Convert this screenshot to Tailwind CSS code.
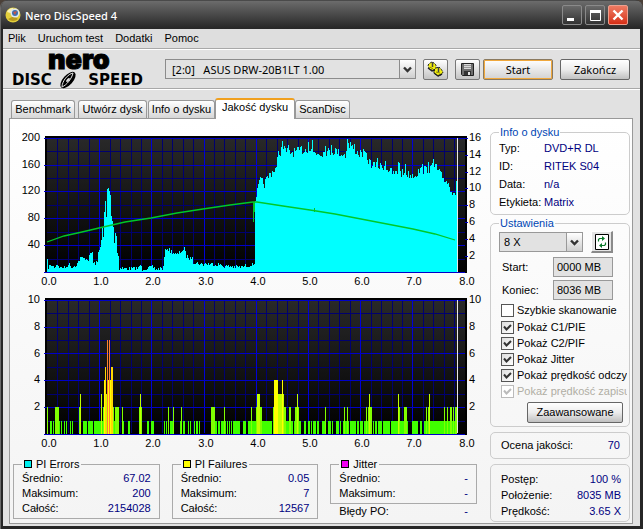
<!DOCTYPE html>
<html lang="pl">
<head>
  <meta charset="UTF-8" />
  <meta name="viewport" content="width=device-width, initial-scale=1.0" />
  <title>Nero DiscSpeed 4</title>
  <script src="https://cdn.jsdelivr.net/npm/@tailwindcss/browser@4"></script>
</head>
<body class="bg-[#4b4038] min-h-screen font-['Liberation_Sans',sans-serif] text-[11px] leading-[15px] text-black">
  <div class="min-h-screen flex flex-col rounded-t-lg overflow-hidden bg-[#262626] border-l border-[#6a6a6a]">

    <!-- title bar -->
    <header class="h-[29px] shrink-0 flex items-center pl-1 pr-[15px] bg-linear-to-b from-[#6c6c6c] via-[#484848] to-[#262626] border-t border-[#4a4a4a]">
      <svg class="w-4 h-4" viewBox="0 0 16 16">
        <circle cx="8" cy="8" r="7.5" fill="#e3cf3c" />
        <path d="M2 5a7 7 0 0 1 6-4l1 6z" fill="#f8f3b8" />
        <path d="M3 12a7 7 0 0 0 10 0l-4-3z" fill="#b89a1c" />
        <circle cx="10" cy="6" r="4.5" fill="#dde6ef" />
        <circle cx="10" cy="6" r="3" fill="#3b6fae" />
        <path d="M8 5l4-1-2 4z" fill="#c4574a" />
      </svg>
      <h1 class="flex-1 ml-1 text-white text-[11px] font-['Noto_Sans',sans-serif] font-medium">Nero DiscSpeed 4</h1>
      <div class="flex gap-[3px]">
        <button aria-label="Minimalizuj" class="w-5 h-5 rounded-xs border border-[#8a8a8a] bg-linear-to-b from-[#6a6a6a] to-[#333]">
          <svg viewBox="0 0 18 18" class="w-full h-full"><rect x="4" y="12" width="7" height="3" fill="#fff" /></svg>
        </button>
        <button aria-label="Maksymalizuj" class="w-5 h-5 rounded-xs border border-[#8a8a8a] bg-linear-to-b from-[#6a6a6a] to-[#333]">
          <svg viewBox="0 0 18 18" class="w-full h-full"><path d="M4.500 4.500h10v10h-10z" fill="none" stroke="#fff" /><path d="M4 4h11v3H4z" fill="#fff" /></svg>
        </button>
        <button aria-label="Zamknij" class="w-5 h-5 rounded-xs border border-[#eda08f] bg-linear-to-b from-[#ee7a62] to-[#d62c12]">
          <svg viewBox="0 0 18 18" class="w-full h-full"><path d="M4.500 4.500l9 9m0-9l-9 9" stroke="#fff" stroke-width="2.400" /></svg>
        </button>
      </div>
    </header>

    <div class="flex-1 flex flex-col ml-[2px] mr-[3px] mb-[3px] bg-[#e1e1e1]">
      <!-- menu -->
      <nav class="h-5 flex items-center gap-3 px-[5px] bg-[#dedede] border-b border-[#a8a8a8]">
        <a href="#">Plik</a>
        <a href="#">Uruchom test</a>
        <a href="#">Dodatki</a>
        <a href="#">Pomoc</a>
      </nav>

      <!-- toolbar -->
      <div class="h-10 flex items-center pl-2 pr-[10px] border-t border-b border-t-white border-b-[#a8a8a8] font-['Noto_Sans',sans-serif]">
        <svg class="w-[134px] h-[38px] shrink-0 overflow-visible" viewBox="11 50 134 38" role="img" aria-label="Nero DiscSpeed">
          <text x="48" y="69" font-family="Inter" font-weight="900" font-size="27" stroke="#000">nero</text>
          <text x="12" y="85" font-family="DejaVu Sans" font-weight="700" font-size="15">DISC</text>
          <text x="143" y="85" text-anchor="end" font-family="DejaVu Sans" font-weight="700" font-size="15">SPEED</text>
          <ellipse cx="68" cy="80" rx="10" ry="5" transform="rotate(-48 68 80)" />
          <path d="M62 87c0-6 6-13 11-14-1 5-6 12-11 14z" fill="none" stroke="#e1e1e1" />
          <ellipse cx="68" cy="80" rx="2.500" ry="1.200" transform="rotate(-48 68 80)" fill="#e1e1e1" />
        </svg>
        <div class="relative flex-1 ml-5 h-5 border border-[#8c8c8c] bg-[#e2e2e2]">
          <select aria-label="Napęd" class="appearance-none w-full h-full pl-[6px] pr-5 whitespace-pre">
            <option>[2:0]&nbsp;&nbsp; ASUS DRW-20B1LT 1.00</option>
          </select>
          <span class="absolute right-0 inset-y-0 w-4 flex items-center justify-center border-l border-[#8c8c8c] bg-linear-to-b from-white to-[#cfcfcf] pointer-events-none">
            <svg class="w-[9px] h-[7px]" viewBox="0 0 9 7"><path d="M1 1.500l3.500 3.500L8 1.500" fill="none" stroke="#333" stroke-width="2.400" /></svg>
          </span>
        </div>
        <button aria-label="Opcje" class="ml-[7px] w-[25px] h-[21px] flex items-center justify-center rounded-xs border border-[#777] bg-linear-to-b from-white to-[#c4c4c4]">
          <svg class="w-[17px] h-[17px]" viewBox="0 0 17 17">
            <path d="M1 4l2-2 2-1 2 1 2 2 0 3-2 2-3 0-2-2z" fill="#f2ee10" stroke="#222" stroke-dasharray="2 1" />
            <path d="M7 9l2-2 3-1 2 2 2 3-1 2-3 2-3-1-2-2z" fill="#f2ee10" stroke="#222" stroke-dasharray="2 1" />
            <path d="M5.500 1v5M11.500 6v5" stroke="#444" stroke-width="1.500" />
            <path d="M1 7l4 3 3-1M7 12l4 3 4-2" fill="none" stroke="#222" stroke-width="1.400" />
            <path d="M3 6l3 2M9 11l4 1" stroke="#8a8600" />
          </svg>
        </button>
        <button aria-label="Zapisz" class="ml-[7px] w-[25px] h-[21px] flex items-center justify-center rounded-xs border border-[#777] bg-linear-to-b from-white to-[#c4c4c4]">
          <svg class="w-[13px] h-[13px]" viewBox="0 0 13 13">
            <path d="M.5.5h12v12h-11l-1-1z" fill="#6e6e6e" stroke="#222" />
            <path d="M3 1h7v5H3z" fill="#d8d8d8" />
            <path d="M3 2.500h7M3 4.500h7" stroke="#999" />
            <path d="M3 8h7v4H3z" fill="#333" /><path d="M7 9h2v3H7z" fill="#e4e4e4" />
          </svg>
        </button>
        <button class="ml-[3px] w-[70px] h-[21px] rounded-xs border border-[#8a7a60] bg-linear-to-b from-white to-[#d2d2d2] ring-1 ring-inset ring-[#f0a83c]">Start</button>
        <button class="ml-[7px] w-[70px] h-[21px] rounded-xs border border-[#666] bg-linear-to-b from-white via-[#ececec] to-[#c0c0c0]">Zakończ</button>
      </div>

      <!-- tabs -->
      <div role="tablist" class="h-[29px] flex items-end pl-2 border-t border-white">
        <button role="tab" class="w-16 h-[18px] mr-[3px] rounded-t-[3px] border border-b-0 border-[#999] bg-linear-to-b from-white to-[#d6d6d6]">Benchmark</button>
        <button role="tab" class="w-[69px] h-[18px] mr-px rounded-t-[3px] border border-b-0 border-[#999] bg-linear-to-b from-white to-[#d6d6d6]">Utwórz dysk</button>
        <button role="tab" class="w-[67px] h-[18px] rounded-t-[3px] border border-b-0 border-[#999] bg-linear-to-b from-white to-[#d6d6d6]">Info o dysku</button>
        <button role="tab" aria-selected="true" class="relative z-10 w-20 h-[21px] -mb-px pb-1 rounded-t-[3px] border-x border-t-2 border-x-[#999] border-t-[#f0a01e] bg-white">Jakość dysku</button>
        <button role="tab" class="w-[55px] h-[18px] rounded-t-[3px] border border-b-0 border-[#999] bg-linear-to-b from-white to-[#d6d6d6]">ScanDisc</button>
      </div>

      <main class="flex-1 flex ml-[6px] mr-[7px] mb-[2px] border border-[#999] bg-linear-to-b from-white to-[#f4f4f4]">
        <div class="flex-1 min-w-0 pt-[7px]">
          <svg id="pie" class="block w-full h-auto text-[11px]" viewBox="10 126 480 162"></svg>
          <svg id="pif" class="block w-full h-auto text-[11px]" viewBox="10 288 480 162"></svg>

          <div class="mt-[7px] grid grid-cols-3 gap-3 pl-[3px] pr-[13px]">
            <fieldset class="border border-[#aaa] px-2 pb-[2px]">
              <legend class="flex items-center gap-1 px-[2px] leading-[14px]"><i class="w-2 h-2 border border-black bg-[#00f0f0]"></i>PI Errors</legend>
              <dl class="grid grid-cols-[auto_1fr]">
                <dt>Średnio:</dt><dd class="text-right text-[#000080]">67.02</dd>
                <dt>Maksimum:</dt><dd class="text-right text-[#000080]">200</dd>
                <dt>Całość:</dt><dd class="text-right text-[#000080]">2154028</dd>
              </dl>
            </fieldset>
            <fieldset class="border border-[#aaa] px-2 pb-[2px]">
              <legend class="flex items-center gap-1 px-[2px] leading-[14px]"><i class="w-2 h-2 border border-black bg-[#ffff00]"></i>PI Failures</legend>
              <dl class="grid grid-cols-[auto_1fr]">
                <dt>Średnio:</dt><dd class="text-right text-[#000080]">0.05</dd>
                <dt>Maksimum:</dt><dd class="text-right text-[#000080]">7</dd>
                <dt>Całość:</dt><dd class="text-right text-[#000080]">12567</dd>
              </dl>
            </fieldset>
            <div>
              <fieldset class="border border-[#aaa] px-2 pb-[2px]">
                <legend class="flex items-center gap-1 px-[2px] leading-[14px]"><i class="w-2 h-2 border border-black bg-[#f000f0]"></i>Jitter</legend>
                <dl class="grid grid-cols-[auto_1fr]">
                  <dt>Średnio:</dt><dd class="text-right text-[#000080]">-</dd>
                  <dt>Maksimum:</dt><dd class="text-right text-[#000080]">-</dd>
                </dl>
              </fieldset>
              <p class="flex justify-between px-[9px]">Błędy PO: <span class="text-[#000080]">-</span></p>
            </div>
          </div>
        </div>

        <aside class="w-[140px] mr-[2px] flex flex-col">
          <fieldset class="mt-[6px] h-[90px] rounded-[5px] border border-[#ccc] px-2">
            <legend class="px-px leading-[14px] text-[#0046b4]">Info o dysku</legend>
            <dl class="grid grid-cols-[45px_1fr] leading-[18px]">
              <dt>Typ:</dt><dd class="text-[#000080]">DVD+R DL</dd>
              <dt>ID:</dt><dd class="text-[#000080]">RITEK S04</dd>
              <dt>Data:</dt><dd class="text-[#000080]">n/a</dd>
              <dt>Etykieta:</dt><dd class="text-[#000080]">Matrix</dd>
            </dl>
          </fieldset>

          <fieldset class="mt-px rounded-[5px] border border-[#ccc] pl-2 pr-[2px] pb-[3px] min-w-0">
            <legend class="px-px leading-[14px] text-[#0046b4]">Ustawienia</legend>
            <div class="flex items-center gap-2 pt-px">
              <div class="relative w-[84px] h-5 border border-[#999] bg-[#e2e2e2]">
                <select aria-label="Prędkość" class="appearance-none w-full h-full pl-1">
                  <option>8 X</option>
                </select>
                <span class="absolute right-0 inset-y-0 w-4 flex items-center justify-center border-l border-[#999] bg-linear-to-b from-white to-[#cfcfcf] pointer-events-none">
                  <svg class="w-[9px] h-[7px]" viewBox="0 0 9 7"><path d="M1 1.500l3.500 3.500L8 1.500" fill="none" stroke="#333" stroke-width="2.400" /></svg>
                </span>
              </div>
              <button aria-label="Odśwież" class="w-[22px] h-[22px] flex items-center justify-center border-r-2 border-b-2 border-t border-l border-t-white border-l-white border-[#8a8a8a] bg-[#e4e4e4]">
                <svg class="w-[14px] h-[16px]" viewBox="0 0 14 16">
                  <path d="M.5.5h13v15H.5z" fill="#fff" stroke="#000" />
                  <path d="M3.500 7.500v-2l1-1H7M10.500 8.500v2l-1 1H7" fill="none" stroke="#0a7a2a" stroke-width="1.200" />
                  <path d="M7 2l3 2.500-3 2.500zM7 9l-3 2.500 3 2.500z" fill="#0a7a2a" />
                </svg>
              </button>
            </div>
            <div class="mt-1 grid grid-cols-[51px_60px] gap-y-[3px] pl-[3px] items-center">
              <label for="from">Start:</label>
              <input id="from" value="0000 MB" readonly class="w-full h-5 pl-[3px] border border-[#999] bg-[#e2e2e2]" />
              <label for="to">Koniec:</label>
              <input id="to" value="8036 MB" readonly class="w-full h-5 pl-[3px] border border-[#999] bg-[#e2e2e2]" />
            </div>
            <div class="mt-[2px] pl-[2px] pr-[2px] flex flex-col leading-4 whitespace-nowrap overflow-hidden">
              <label class="flex items-center gap-[3px] mb-px"><input type="checkbox" class="appearance-none shrink-0 w-[13px] h-[13px] border border-[#555] bg-white" />Szybkie skanowanie</label>
              <label class="flex items-center gap-[3px]"><span class="grid shrink-0"><input type="checkbox" checked class="appearance-none [grid-area:1/1] w-[13px] h-[13px] border border-[#555] bg-linear-to-br from-[#ddd] to-white" /><svg class="[grid-area:1/1] w-[13px] h-[13px] pointer-events-none" viewBox="0 0 13 13"><path d="M3 5.500l2.500 3L10 4" fill="none" stroke="#333" stroke-width="2" /></svg></span>Pokaż C1/PIE</label>
              <label class="flex items-center gap-[3px]"><span class="grid shrink-0"><input type="checkbox" checked class="appearance-none [grid-area:1/1] w-[13px] h-[13px] border border-[#555] bg-linear-to-br from-[#ddd] to-white" /><svg class="[grid-area:1/1] w-[13px] h-[13px] pointer-events-none" viewBox="0 0 13 13"><path d="M3 5.500l2.500 3L10 4" fill="none" stroke="#333" stroke-width="2" /></svg></span>Pokaż C2/PIF</label>
              <label class="flex items-center gap-[3px]"><span class="grid shrink-0"><input type="checkbox" checked class="appearance-none [grid-area:1/1] w-[13px] h-[13px] border border-[#555] bg-linear-to-br from-[#ddd] to-white" /><svg class="[grid-area:1/1] w-[13px] h-[13px] pointer-events-none" viewBox="0 0 13 13"><path d="M3 5.500l2.500 3L10 4" fill="none" stroke="#333" stroke-width="2" /></svg></span>Pokaż Jitter</label>
              <label class="flex items-center gap-[3px]"><span class="grid shrink-0"><input type="checkbox" checked class="appearance-none [grid-area:1/1] w-[13px] h-[13px] border border-[#555] bg-linear-to-br from-[#ddd] to-white" /><svg class="[grid-area:1/1] w-[13px] h-[13px] pointer-events-none" viewBox="0 0 13 13"><path d="M3 5.500l2.500 3L10 4" fill="none" stroke="#333" stroke-width="2" /></svg></span>Pokaż prędkość odczy</label>
              <label class="flex items-center gap-[3px] text-[#b0aea4]"><span class="grid shrink-0"><input type="checkbox" checked disabled class="appearance-none [grid-area:1/1] w-[13px] h-[13px] border border-[#bbb] bg-white" /><svg class="[grid-area:1/1] w-[13px] h-[13px] pointer-events-none" viewBox="0 0 13 13"><path d="M3 5.500l2.500 3L10 4" fill="none" stroke="#bbb" stroke-width="2" /></svg></span>Pokaż prędkość zapisu</label>
            </div>
            <button class="block mt-[3px] ml-7 w-24 h-[21px] rounded-xs border border-[#666] bg-linear-to-b from-white via-[#ececec] to-[#c0c0c0]">Zaawansowane</button>
          </fieldset>

          <dl class="mt-[5px] h-[27px] flex items-center justify-between rounded-[5px] border border-[#ccc] pl-[10px] pr-[9px]">
            <dt>Ocena jakości:</dt><dd class="text-[#000080]">70</dd>
          </dl>

          <dl class="mt-[5px] mb-px grid grid-cols-[auto_1fr] rounded-[5px] border border-[#ccc] pl-[10px] pr-[8px] pt-[6px] pb-[2px] leading-4">
            <dt>Postęp:</dt><dd class="text-right text-[#000080]">100 %</dd>
            <dt>Położenie:</dt><dd class="text-right text-[#000080]">8035 MB</dd>
            <dt>Prędkość:</dt><dd class="text-right text-[#000080]">3.65 X</dd>
          </dl>
        </aside>
      </main>
    </div>
  </div>

  <script>
    const X0 = 47, STEP = 52.2;

    function rect(x, y, w, h, fill) {
      return `<rect x="${x}" y="${y}" width="${w}" height="${h}" fill="${fill}"/>`;
    }
    function label(x, y, text, anchor) {
      return `<text x="${x}" y="${y}" text-anchor="${anchor}">${text}</text>`;
    }

    // black plot area with blue grid, top is the y of the highest grid line
    function grid(id, top) {
      let s = `<defs><linearGradient id="${id}" x2="0" y2="1"><stop stop-color="#292929"/><stop offset="1"/></linearGradient></defs>`;
      s += rect(45, top - 2, 422, 137, "#000") + rect(47, top, 418, 133, `url(#${id})`);
      for (let i = 0; i < 40; i++) {
        if (i % 5) s += rect(Math.round(X0 + i * STEP / 5), top, 1, 133, "#000070");
      }
      for (let i = 0; i < 5; i++) s += rect(47, Math.round(top + 13.4 + i * 26.8), 418, 1, "#000070");
      for (let i = 1; i < 8; i++) s += rect(Math.round(X0 + i * STEP), top, 1, 133, "#0000d8");
      for (let i = 0; i < 6; i++) s += rect(44, Math.round(top + i * 26.7), 421, 1, "#0000c8");
      for (let i = 0; i <= 8; i++) s += label(Math.round(X0 + 2 + i * STEP), top + 147, i + ".0", "middle");
      return s;
    }

    // PI errors: [x, top of column], straight between the points
    const pie = [[47,261],[48,267],[51,265],[54,267],[57,264],[60,268],[66,267],[68,264],[72,267],[77,264],[80,258],[88,259],[90,254],[92,252],[93,263],
      [97,263],[98,253],[100,245],[101,240],[102,228],[103,237],[104,212],[105,201],[106,217],[107,189],[108,188],[109,191],[110,195],[111,216],[112,221],
      [113,227],[114,243],[115,233],[116,236],[117,253],[118,256],[119,268],[130,269],[138,268],[140,265],[142,269],[152,267],[155,269],[163,268],[164,257],
      [165,251],[166,248],[170,251],[176,255],[180,252],[184,249],[186,256],[190,259],[192,256],[193,262],[200,264],[215,264],[225,266],[240,267],[254,264],
      [255,200],[257,190],[260,181],[264,184],[270,173],[276,168],[278,153],[283,149],[290,153],[300,151],[307,149],[316,153],[325,152],[335,151],[345,155],
      [347,145],[353,148],[358,153],[364,154],[370,163],[378,167],[384,166],[392,173],[402,173],[412,175],[420,171],[428,169],[434,166],[440,175],[446,181],
      [452,191],[455,192],[457,176]];
    const peaks = {282:141, 288:145, 301:146, 308:142, 312:140, 325:146, 331:145, 347:139, 350:142, 354:144, 365:152, 377:158, 385:161, 398:162, 399:163, 405:164, 422:164, 428:162, 433:159, 436:164};

    let seed = 7;
    function rnd() {
      seed = (seed * 16807) % 2147483647;
      return seed / 2147483647 - 0.5;
    }
    function topAt(x) {
      const i = pie.findIndex(p => p[0] >= x);
      if (pie[i][0] === x) return pie[i][1];
      const [a, b] = [pie[i - 1], pie[i]];
      return a[1] + (b[1] - a[1]) * (x - a[0]) / (b[0] - a[0]);
    }

    let s = grid("g1", 138);
    for (let x = 47; x < 457; x++) {
      const noise = rnd() * (x > 257 ? 9 : 4);
      const y = peaks[x] || Math.round(topAt(x) + (x > 100 && x < 119 ? 0 : noise));
      s += rect(x, y, 1, 272 - y, "#00ffff");
    }
    s += rect(457, 138, 1, 134, "#e8e8e8");
    s += `<polyline points="47,242 64,236 82,232 99,228 125,222 151,218 177,213 203,209 230,205 253,202 257,202 283,206 310,210 335,214 361,219 387,224 413,229 435,234 455,240" fill="none" stroke="#00c828" stroke-width="1.300"/>`;
    s += rect(253, 202, 1, 20, "#00c828") + rect(254, 202, 1, 10, "#00c828") + rect(314, 208, 1, 4, "#00c828");
    for (let i = 0; i < 5; i++) s += label(40, Math.round(141 + i * 26.7), 200 - 40 * i, "end");
    for (let i = 0; i < 8; i++) {
      s += label(469, Math.round(141 + i * 16.8), 16 - 2 * i, "start");
      s += rect(465, Math.round(138 + i * 16.8), 3, 1, "#0000c0");
    }
    document.getElementById("pie").innerHTML = s;

    // PI failures: [x, width, value]
    const pif = [[47,1,2],[50,2,1],[53,1,1],[55,4,2],[59,1,1],[61,1,1],[64,1,1],[66,1,1],[70,1,1],[72,1,1],[79,1,2],[80,1,3],[83,4,1],[88,2,1],[90,3,1],
      [94,2,1],[96,8,1],[101,1,3],[103,1,2],[104,1,4],[105,1,5],[106,1,3],[107,1,7],[108,1,4],[109,1,7],[110,1,4],[111,2,5],[113,1,2],[114,1,1],[115,4,2],
      [122,1,2],[123,1,1],[128,2,1],[139,1,2],[140,1,3],[141,1,2],[147,2,1],[151,3,1],[164,1,1],[166,1,1],[168,1,2],[170,3,1],[173,1,2],[180,1,1],[181,1,2],
      [183,2,1],[188,1,1],[190,1,1],[194,1,1],[196,2,1],[199,1,1],[211,4,2],[215,2,1],[218,2,1],[221,3,1],[224,1,2],[225,1,1],[227,1,1],[229,1,1],[231,1,1],
      [233,7,1],[243,3,1],[248,24,1],[251,1,2],[256,6,2],[257,3,3],[273,13,2],[274,4,4],[278,6,3],[282,1,4],[286,7,1],[289,2,2],[294,7,1],[295,4,2],[297,1,3],
      [304,2,1],[308,2,1],[311,1,1],[313,3,1],[317,2,1],[322,4,1],[325,1,2],[328,3,1],[332,1,1],[336,3,1],[340,1,1],[343,6,1],[344,1,2],[347,1,2],[350,6,1],
      [357,2,1],[360,3,1],[364,8,1],[366,1,2],[368,4,2],[369,1,3],[373,1,1],[375,2,1],[378,4,1],[383,7,1],[391,12,1],[398,1,3],[399,1,2],[403,5,1],[404,3,2],
      [412,6,1],[420,2,1],[424,33,1],[426,1,2],[428,1,2],[429,1,3],[444,1,2],[447,1,2],[450,2,2],[453,1,2],[455,2,2]];
    const colors = ["", "#40ff00", "#80ff00", "#c0ff00", "#ffff00", "#ffd800", "#ffa000", "#ff8030"];

    s = grid("g2", 300);
    for (const [x, w, v] of pif) {
      const h = Math.round(v * 13.4);
      s += rect(x, 434 - h, w, h, colors[v]);
    }
    s += rect(457, 300, 1, 133, "#e8e8e8");
    for (let i = 0; i < 5; i++) {
      const y = Math.round(303 + i * 26.8);
      s += label(40, y, 10 - 2 * i, "end") + label(469, y, 10 - 2 * i, "start");
    }
    document.getElementById("pif").innerHTML = s;
  </script>
</body>
</html>
